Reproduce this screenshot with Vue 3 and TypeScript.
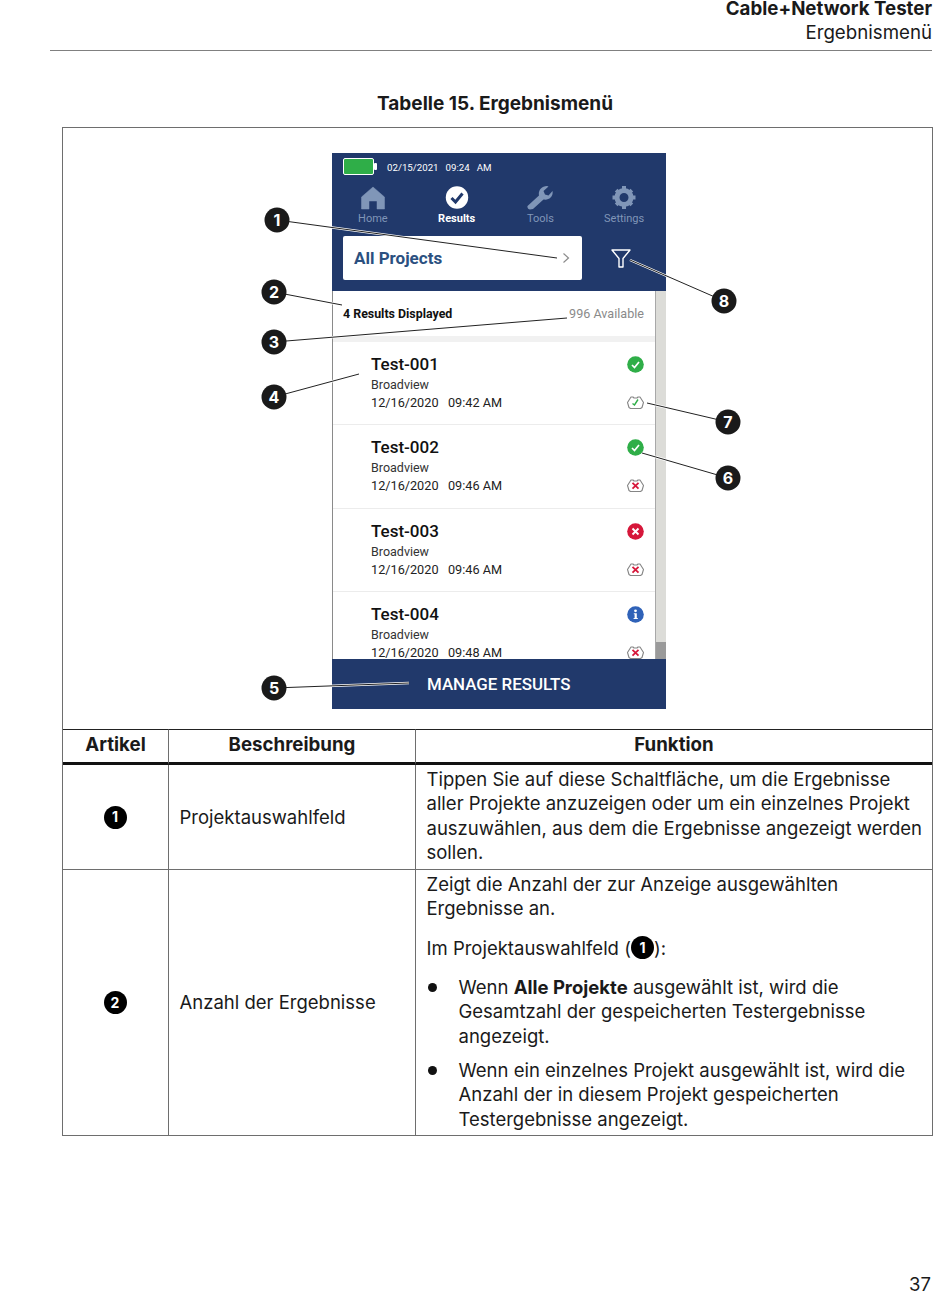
<script setup lang="ts">
interface ResultRow { name: string; time: string; status: 'pass' | 'fail' | 'info'; cable: 'pass' | 'fail' }
const rows: ResultRow[] = [
  { name: 'Test-001', time: '12/16/2020\u00a0\u00a0\u00a009:42 AM', status: 'pass', cable: 'pass' },
  { name: 'Test-002', time: '12/16/2020\u00a0\u00a0\u00a009:46 AM', status: 'pass', cable: 'fail' },
  { name: 'Test-003', time: '12/16/2020\u00a0\u00a0\u00a009:46 AM', status: 'fail', cable: 'fail' },
  { name: 'Test-004', time: '12/16/2020\u00a0\u00a0\u00a009:48 AM', status: 'info', cable: 'fail' }
]
interface Callout { n: number; cx: number; cy: number; x2: number; y2: number }
const callouts: Callout[] = [
  { n: 1, cx: 215, cy: 93, x2: 495, y2: 131 },
  { n: 2, cx: 212, cy: 165, x2: 280, y2: 178 },
  { n: 3, cx: 212, cy: 215, x2: 505, y2: 191 },
  { n: 4, cx: 212, cy: 270, x2: 297, y2: 247 },
  { n: 5, cx: 212, cy: 561, x2: 347, y2: 556 },
  { n: 6, cx: 666, cy: 351, x2: 580, y2: 326 },
  { n: 7, cx: 666, cy: 295, x2: 585, y2: 276 },
  { n: 8, cx: 662, cy: 174, x2: 568, y2: 133 }
]
</script>

<template>
  <div class="page">
    <header class="head">
      <div class="head-title">Cable+Network Tester</div>
      <div class="head-sub">Ergebnismenü</div>
    </header>
    <h1 class="caption">Tabelle 15. Ergebnismenü</h1>

    <section class="table">
      <div class="figure">
        <div class="phone">
          <div class="top">
            <div class="status">
              <svg class="battery" width="34" height="18" viewBox="0 0 34 18">
                <rect x="0.5" y="0.5" width="30" height="16" rx="1.5" fill="#2fae48" stroke="#fff" />
                <rect x="31" y="5" width="3" height="7" rx="1" fill="#fff" />
              </svg>
              <span>02/15/2021</span><span>09:24</span><span>AM</span>
            </div>
            <nav class="nav">
              <div class="nav-item">
                <svg width="26" height="25" viewBox="0 0 26 25"><path d="M13 2 L24.5 12 V24 H17 V16 H9 V24 H1.5 V12 Z" fill="#8096b8" stroke="#8096b8" stroke-width="0.5" stroke-linejoin="round" /></svg>
                <span>Home</span>
              </div>
              <div class="nav-item active">
                <svg width="26" height="25" viewBox="0 0 26 25"><circle cx="13" cy="12.5" r="11.2" fill="#fff" /><path d="M7.5 13 L11.5 17 L18.5 8.5" fill="none" stroke="#21396b" stroke-width="3" /></svg>
                <span>Results</span>
              </div>
              <div class="nav-item">
                <svg width="26" height="25" viewBox="0 0 26 25"><path d="M3 24.5 C1.5 24.5 0 23 0.5 21 L12 10.5 C11 6 14 1 20 1 L21.5 1.5 L16.5 6 L18 9.5 L21.5 10.5 L25.5 6 C26.5 11 22.5 15.5 16.5 14.5 L6 24 Z" fill="#8096b8" /></svg>
                <span>Tools</span>
              </div>
              <div class="nav-item">
                <svg width="26" height="25" viewBox="0 0 26 25">
                  <circle cx="13" cy="12.5" r="7" fill="none" stroke="#8096b8" stroke-width="5" />
                  <path d="M11 1 H15 V5 H11 Z M11 20 H15 V24 H11 Z M1.5 10.5 H5.5 V14.5 H1.5 Z M20.5 10.5 H24.5 V14.5 H20.5 Z M3.8 6.5 L6.5 3.8 L9.5 6.8 L6.8 9.5 Z M16.5 6.8 L19.5 3.8 L22.2 6.5 L19.2 9.5 Z M3.8 18.5 L6.8 15.5 L9.5 18.2 L6.5 21.2 Z M16.5 18.2 L19.2 15.5 L22.2 18.5 L19.5 21.2 Z" fill="#8096b8" />
                </svg>
                <span>Settings</span>
              </div>
            </nav>
            <div class="project-row">
              <div class="project">
                <span>All Projects</span>
                <svg width="8" height="12" viewBox="0 0 8 12"><path d="M1.5 1.5 L6.5 6 L1.5 10.5" fill="none" stroke="#8c8c8c" stroke-width="1.2" /></svg>
              </div>
              <svg class="filter" width="20" height="19" viewBox="0 0 20 19"><path d="M1 1 H19 L12 9.5 V18 H8 V9.5 Z" fill="none" stroke="#fff" stroke-width="1.4" stroke-linejoin="round" /></svg>
            </div>
          </div>

          <div class="list-wrap">
            <div class="list">
              <div class="summary">
                <strong>4 Results Displayed</strong>
                <span>996 Available</span>
              </div>
              <div class="band"></div>
              <div v-for="r in rows" :key="r.name" class="row">
                <div class="row-text">
                  <div class="row-name">{{ r.name }}</div>
                  <div class="row-site">Broadview</div>
                  <div class="row-time">{{ r.time }}</div>
                </div>
                <div class="row-icons">
                  <svg width="17" height="17" viewBox="0 0 17 17">
                    <circle cx="8.5" cy="8.5" r="8.3" :fill="r.status === 'pass' ? '#2fae48' : r.status === 'fail' ? '#d6173a' : '#2f62b8'" />
                    <path v-if="r.status === 'pass'" d="M5 9 L7.5 11.5 L12 6" fill="none" stroke="#fff" stroke-width="1.7" />
                    <path v-else-if="r.status === 'fail'" d="M5.5 5.5 L11.5 11.5 M11.5 5.5 L5.5 11.5" fill="none" stroke="#fff" stroke-width="1.9" />
                    <g v-else fill="#fff"><circle cx="8.5" cy="4.8" r="1.4" /><path d="M6.8 7.2 H9.8 V12 H10.8 V13 H6.6 V12 H7.6 V8.2 H6.8 Z" /></g>
                  </svg>
                  <svg class="cable" width="17" height="13" viewBox="0 0 17 13">
                    <path d="M4 1 H6 L7 2 H10 L11 1 H13 L16.5 6.5 L15 11.5 L13.5 12.5 H3.5 L2 11.5 L0.5 6.5 Z" fill="#fff" stroke="#858585" stroke-width="1.1" stroke-linejoin="round" />
                    <path v-if="r.cable === 'pass'" d="M5.5 7.5 L7.5 9 L11 3.5" fill="none" stroke="#2fae48" stroke-width="1.4" />
                    <path v-else d="M5.5 3.8 L11.5 9.6 M11.5 3.8 L5.5 9.6" fill="none" stroke="#d6173a" stroke-width="1.8" />
                  </svg>
                </div>
              </div>
            </div>
            <div class="scrollbar"><div class="thumb"></div></div>
          </div>

          <div class="manage">MANAGE RESULTS</div>
        </div>

        <svg class="leaders" width="869" height="602" viewBox="0 0 869 602">
          <g v-for="c in callouts" :key="c.n">
            <line :x1="c.cx" :y1="c.cy" :x2="c.x2" :y2="c.y2" stroke="#fff" stroke-width="2.4" />
            <line :x1="c.cx" :y1="c.cy" :x2="c.x2" :y2="c.y2" stroke="#222" stroke-width="1" />
            <circle :cx="c.cx" :cy="c.cy" r="12.5" fill="#1a1a1a" />
            <text :x="c.cx" :y="c.cy + 5.8" class="callout-text" text-anchor="middle">{{ c.n }}</text>
          </g>
        </svg>
      </div>

      <div class="grid">
        <div class="th">Artikel</div>
        <div class="th">Beschreibung</div>
        <div class="th">Funktion</div>

        <div class="td center"><span class="badge">1</span></div>
        <div class="td desc">Projektauswahlfeld</div>
        <div class="td func first">
          <p>Tippen Sie auf diese Schaltfläche, um die Ergebnisse<br />aller Projekte anzuzeigen oder um ein einzelnes Projekt<br />auszuwählen, aus dem die Ergebnisse angezeigt werden<br />sollen.</p>
        </div>

        <div class="td center"><span class="badge">2</span></div>
        <div class="td desc">Anzahl der Ergebnisse</div>
        <div class="td func">
          <p>Zeigt die Anzahl der zur Anzeige ausgewählten<br />Ergebnisse an.</p>
          <p class="gap">Im Projektauswahlfeld (<span class="badge inline">1</span>):</p>
          <ul>
            <li>Wenn <b>Alle Projekte</b> ausgewählt ist, wird die<br />Gesamtzahl der gespeicherten Testergebnisse<br />angezeigt.</li>
            <li>Wenn ein einzelnes Projekt ausgewählt ist, wird die<br />Anzahl der in diesem Projekt gespeicherten<br />Testergebnisse angezeigt.</li>
          </ul>
        </div>
      </div>
    </section>

    <footer class="foot">37</footer>
  </div>
</template>

<style scoped>
.page {
  width: 950px;
  height: 1309px;
  box-sizing: border-box;
  padding: 0 17px 0 0;
  font-family: Inter, "Liberation Sans", sans-serif;
  color: #1a1a1a;
  background: #fff;
  display: flex;
  flex-direction: column;
  overflow: hidden;
}
.head {
  margin: 0 1px 0 50px;
  height: 50px;
  flex: none;
  border-bottom: 1px solid #808080;
  box-sizing: content-box;
  text-align: right;
  font-size: 18.7px;
}
.head-title { font-weight: 700; line-height: 17px; }
.head-sub { line-height: 24px; margin-top: 4px; }
.caption {
  margin: 41px 0 0 62px;
  width: 866px;
  flex: none;
  text-align: center;
  font-size: 19px;
  font-weight: 700;
  line-height: 24px;
  height: 24px;
}
.table {
  margin: 11px 0 0 62px;
  width: 871px;
  flex: none;
  box-sizing: border-box;
  border: 1px solid #6e6e6e;
  border-bottom: 0;
}
.figure {
  position: relative;
  height: 601px;
  padding: 25px 0 0 269px;
  box-sizing: border-box;
}
.leaders { position: absolute; left: -1px; top: -1px; pointer-events: none; }
.callout-text { font: 700 16px Inter, "Liberation Sans", sans-serif; fill: #fff; }

.phone {
  width: 334px;
  height: 556px;
  display: flex;
  flex-direction: column;
  font-family: Roboto, sans-serif;
  background: #fff;
}
.top { background: #21396b; height: 138px; flex: none; box-sizing: border-box; padding: 5px 0 0 11px; }
.status { display: flex; align-items: center; gap: 7px; height: 18px; color: #fff; font-size: 9.7px; }
.status span:first-of-type { margin-left: 3px; }
.battery { flex: none; }
.nav { display: flex; margin: 9px 0 0 -12px; }
.nav-item {
  flex: 1;
  display: flex;
  flex-direction: column;
  align-items: center;
  color: #8096b8;
  font-size: 11px;
  line-height: 14px;
}
.nav-item span { margin-top: 2px; }
.nav-item.active { color: #fff; font-weight: 700; }
.project-row { display: flex; align-items: center; margin-top: 10px; }
.project {
  width: 239px;
  height: 44px;
  box-sizing: border-box;
  padding: 0 12px 0 11px;
  background: #fff;
  border-radius: 2px;
  display: flex;
  align-items: center;
  justify-content: space-between;
  color: #2b5080;
  font-size: 17px;
  font-weight: 700;
}
.filter { margin-left: 29px; }
.list-wrap {
  flex: 1;
  min-height: 0;
  display: flex;
  border-left: 1px solid #8a8a8a;
  overflow: hidden;
}
.list { flex: 1; min-width: 0; overflow: hidden; }
.summary {
  height: 45px;
  box-sizing: border-box;
  padding: 0 11px 0 10px;
  display: flex;
  align-items: center;
  justify-content: space-between;
  font-size: 12.4px;
}
.summary strong { font-weight: 700; color: #111; }
.summary span { color: #8a8a8a; font-size: 12.6px; }
.band { height: 6px; background: #f1f1f1; }
.row {
  height: 83.4px;
  box-sizing: border-box;
  border-bottom: 1px solid #ececec;
  padding: 13px 11px 0 38px;
  display: flex;
  justify-content: space-between;
}
.row-name { font-size: 17px; font-weight: 500; line-height: 18px; color: #111; }
.row-site { font-size: 12.5px; line-height: 16px; margin-top: 4px; color: #333; }
.row-time { font-size: 12.7px; line-height: 16px; margin-top: 2px; color: #222; }
.row-icons { display: flex; flex-direction: column; align-items: center; padding-top: 1px; }
.cable { margin-top: 23px; }
.scrollbar {
  width: 11px;
  flex: none;
  background: #dcdcd8;
  border-left: 1px solid #a8a8a8;
  box-sizing: border-box;
  display: flex;
  flex-direction: column;
  justify-content: flex-end;
}
.thumb { height: 17px; background: #9a9a9a; }
.manage {
  height: 50px;
  flex: none;
  background: #21396b;
  color: #fff;
  font-size: 16.9px;
  font-weight: 500;
  line-height: 50px;
  padding-left: 95px;
}

.grid {
  display: grid;
  grid-template-columns: 105px 247px 1fr;
}
.th {
  height: 36px;
  box-sizing: border-box;
  border-top: 1px solid #222;
  border-bottom: 3px solid #111;
  border-left: 1px solid #6e6e6e;
  text-align: center;
  font-size: 18.7px;
  font-weight: 700;
  line-height: 30px;
}
.th:first-child { border-left: 0; }
.td {
  box-sizing: border-box;
  border-left: 1px solid #6e6e6e;
  border-bottom: 1px solid #6e6e6e;
  font-size: 18.5px;
  line-height: 24.4px;
}
.td.center { border-left: 0; padding-right: 1px; display: flex; align-items: center; justify-content: center; }
.desc { display: flex; align-items: center; padding-left: 10.5px; }
.func { padding: 2px 8px 4px 10.5px; }
.func.first { padding-top: 2px; padding-bottom: 4.4px; }
.func p { margin: 0; }
.func p.gap { margin-top: 15px; }
.func ul { list-style: none; margin: 14.6px 0 0; padding: 0; }
.func li { position: relative; padding-left: 32px; margin-bottom: 10px; }
.func li:last-child { margin-bottom: 0; }
.func li::before {
  content: "";
  position: absolute;
  left: 1px;
  top: 8px;
  width: 9px;
  height: 9px;
  border-radius: 50%;
  background: #111;
}
.badge {
  display: inline-flex;
  align-items: center;
  justify-content: center;
  width: 23px;
  height: 23px;
  border-radius: 50%;
  background: #000;
  color: #fff;
  font-size: 14px;
  font-weight: 700;
  line-height: 1;
}
.badge.inline { vertical-align: middle; margin: -4px 0 -2px; position: relative; top: -1px; }
.foot {
  margin-top: auto;
  text-align: right;
  padding: 0 2px 13px 0;
  font-size: 18.5px;
  line-height: 24px;
}
</style>
